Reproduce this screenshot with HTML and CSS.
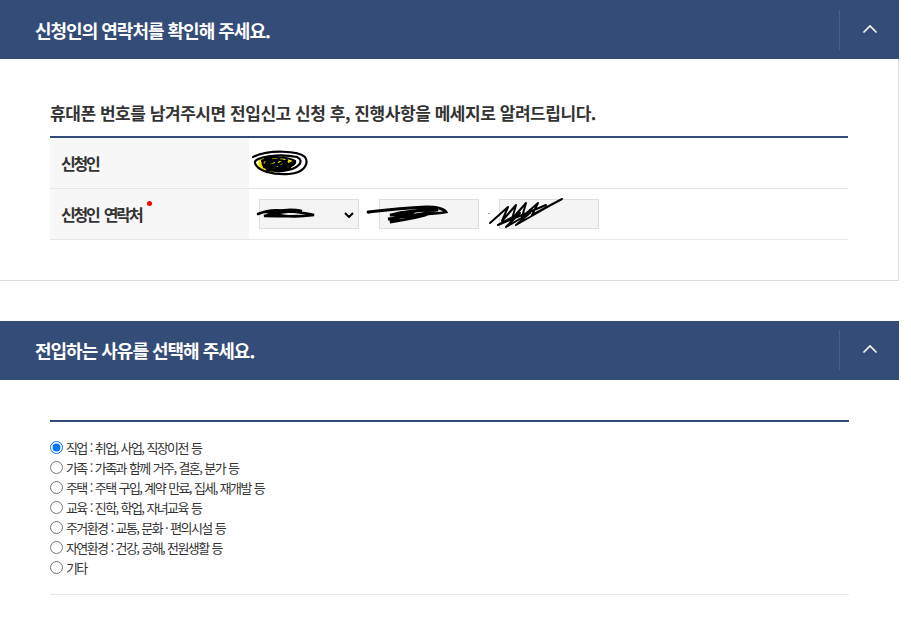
FILE: index.html
```html
<!DOCTYPE html>
<html lang="ko">

<head>
    <meta charset="UTF-8">
    <meta name="viewport" content="width=device-width, initial-scale=1.0">
    <title>전입신고</title>
    <link rel="stylesheet" href="styles.css">
</head>

<body>
    <div class="wrap">
        <!-- 신청인 연락처 -->
        <section class="panel">
            <div class="panel-head">
                <h2 class="panel-title">신청인의 연락처를 확인해 주세요.</h2>
                <button class="fold-btn" type="button" aria-label="접기">
                    <svg width="16" height="10" viewBox="0 0 16 10"><path d="M1.5 8.5 L8 2 L14.5 8.5" fill="none" stroke="#fff" stroke-width="1.6"/></svg>
                </button>
            </div>
            <div class="panel-body">
                <p class="guide">휴대폰 번호를 남겨주시면 전입신고 신청 후, 진행사항을 메세지로 알려드립니다.</p>
                <table class="form-table">
                    <tbody>
                        <tr>
                            <th>신청인</th>
                            <td>
                                <span class="scribble name-scribble">
                                    <svg width="60" height="30" viewBox="0 0 60 30">
                                        <path d="M10 12 L24 9 L38 11 L46 16 L40 23 L20 26 L9 21 Z" fill="#f2e600"/>
                                        <path d="M4 10 C20 2 50 4 56 10 C60 16 56 26 40 27 C24 28 8 24 6 16 C4 10 30 6 48 10 C56 14 50 22 34 24 C20 25 12 20 14 14 C18 8 40 10 46 14 C48 20 30 22 20 20 C12 18 18 12 30 13 C40 14 42 18 30 19" fill="none" stroke="#000" stroke-width="2.2" stroke-linecap="round"/>
                                        <path d="M12 14 L22 12 L16 18 L30 12 L24 20 L38 13 L32 21 L44 15 L40 22 L18 23 L28 17 L14 20" fill="none" stroke="#000" stroke-width="2.4" stroke-linejoin="round"/>
                                    </svg>
                                </span>
                            </td>
                        </tr>
                        <tr>
                            <th>신청인 연락처<span class="req"></span></th>
                            <td>
                                <div class="phone-row">
                                    <div class="field">
                                        <select class="phone-select">
                                            <option></option>
                                        </select>
                                        <span class="scribble sel-scribble">
                                            <svg width="60" height="16" viewBox="0 0 60 16">
                                                <path d="M2 9 C14 4 26 5 40 7 C48 8 54 9 58 10 C44 12 26 11 8 11 C20 8 34 6 46 6 C36 4 24 5 14 8 C24 11 36 12 48 11" fill="none" stroke="#000" stroke-width="2.6" stroke-linecap="round"/>
                                            </svg>
                                        </span>
                                    </div>
                                    <span class="dash">-</span>
                                    <div class="field">
                                        <input class="phone-input" type="text">
                                        <span class="scribble mid-scribble">
                                            <svg width="84" height="22" viewBox="0 0 84 22">
                                                <path d="M2 10 C20 8 40 6 60 5 C70 5 78 7 80 10 C66 13 44 13 24 13 C36 10 56 8 72 8 C58 12 40 15 22 17 C36 15 52 12 66 11 C52 16 38 18 24 20 C38 14 50 8 62 5" fill="none" stroke="#000" stroke-width="2.8" stroke-linecap="round"/>
                                            </svg>
                                        </span>
                                    </div>
                                    <span class="dash">-</span>
                                    <div class="field">
                                        <input class="phone-input" type="text">
                                        <span class="scribble end-scribble">
                                            <svg width="80" height="34" viewBox="0 0 80 34">
                                                <path d="M4 26 L22 10 L16 24 L30 8 L26 22 L40 6 L36 20 L52 6 L46 18 L76 2 L58 12 L30 28 L44 16 L20 30 L34 16 L12 28 L60 8" fill="none" stroke="#000" stroke-width="2" stroke-linejoin="round" stroke-linecap="round"/>
                                            </svg>
                                        </span>
                                    </div>
                                </div>
                            </td>
                        </tr>
                    </tbody>
                </table>
            </div>
        </section>

        <!-- 전입 사유 -->
        <section class="panel">
            <div class="panel-head">
                <h2 class="panel-title">전입하는 사유를 선택해 주세요.</h2>
                <button class="fold-btn" type="button" aria-label="접기">
                    <svg width="16" height="10" viewBox="0 0 16 10"><path d="M1.5 8.5 L8 2 L14.5 8.5" fill="none" stroke="#fff" stroke-width="1.6"/></svg>
                </button>
            </div>
            <div class="panel-body reason-body">
                <ul class="reason-list">
                    <li><label><input type="radio" name="reason" checked>직업 : 취업, 사업, 직장이전 등</label></li>
                    <li><label><input type="radio" name="reason">가족 : 가족과 함께 거주, 결혼, 분가 등</label></li>
                    <li><label><input type="radio" name="reason">주택 : 주택 구입, 계약 만료, 집세, 재개발 등</label></li>
                    <li><label><input type="radio" name="reason">교육 : 진학, 학업, 자녀교육 등</label></li>
                    <li><label><input type="radio" name="reason">주거환경 : 교통, 문화 · 편의시설 등</label></li>
                    <li><label><input type="radio" name="reason">자연환경 : 건강, 공해, 전원생활 등</label></li>
                    <li><label><input type="radio" name="reason">기타</label></li>
                </ul>
            </div>
        </section>
    </div>
</body>

</html>
```

FILE: styles.css
```css
body {
    margin: 0;
    padding: 0;
    background: #fff;
    font-family: "Noto Sans CJK KR", "Noto Sans", sans-serif;
    color: #333;
}

.wrap {
    width: 899px;
}

.panel {
    margin-bottom: 40px;
}

.panel-head {
    display: flex;
    align-items: center;
    justify-content: space-between;
    height: 59px;
    padding-left: 35px;
    background-color: #344c78;
}

.panel-title {
    margin: 0;
    color: #fff;
    font-size: 18px;
    font-weight: 700;
    letter-spacing: -1px;
}

.fold-btn {
    display: flex;
    align-items: center;
    justify-content: center;
    width: 60px;
    height: 40px;
    padding: 0 0 2px 0;
    border: none;
    border-left: 1px solid #4a6089;
    background: transparent;
    cursor: pointer;
}

.panel-body {
    padding: 40px 50px 40px 50px;
    border: 1px solid #ddd;
    border-top: none;
    border-left: none;
}

.guide {
    margin: 0 0 9px 0;
    font-size: 17px;
    font-weight: 700;
    line-height: 28px;
    letter-spacing: -0.45px;
    color: #333;
}

.form-table {
    width: 100%;
    border-collapse: collapse;
    border-top: 2px solid #344c78;
}

.form-table th,
.form-table td {
    height: 51px;
    border-bottom: 1px solid #e6e6e6;
    padding: 0;
    box-sizing: border-box;
}

.form-table th {
    width: 199px;
    padding-left: 11px;
    background-color: #f7f7f7;
    text-align: left;
    font-size: 16px;
    font-weight: 700;
    letter-spacing: -2.2px;
    word-spacing: 3px;
    color: #333;
}

.form-table td {
    padding-left: 10px;
}

.req {
    display: inline-block;
    width: 5px;
    height: 5px;
    margin-left: 6px;
    border-radius: 50%;
    background: #f00;
    vertical-align: 15px;
}

.scribble {
    display: inline-block;
    line-height: 0;
}

.name-scribble {
    margin-left: -10px;
    margin-top: 4px;
}

.phone-row {
    display: flex;
    align-items: center;
}

.field {
    position: relative;
}

.phone-select,
.phone-input {
    display: block;
    width: 100px;
    height: 30px;
    margin: 0;
    box-sizing: border-box;
    border: 1px solid #ddd;
    background-color: #f4f4f4;
    font-family: inherit;
    font-size: 13px;
}

.phone-select {
    appearance: none;
    background-image: url("data:image/svg+xml,%3Csvg xmlns='http://www.w3.org/2000/svg' width='10' height='6' viewBox='0 0 10 6'%3E%3Cpath d='M1 1 L5 5 L9 1' fill='none' stroke='%23000' stroke-width='2'/%3E%3C/svg%3E");
    background-repeat: no-repeat;
    background-position: 84px 12px;
}

.dash {
    width: 20px;
    text-align: center;
    font-size: 8px;
    color: #555;
}

.field .scribble {
    position: absolute;
}

.sel-scribble {
    left: -3px;
    top: 6px;
}

.mid-scribble {
    left: -13px;
    top: 3px;
}

.end-scribble {
    left: -13px;
    top: -2px;
}

.reason-body {
    padding-bottom: 0;
    border: none;
}

.reason-list {
    margin: 0;
    padding: 16px 0 16px 0;
    list-style: none;
    border-top: 2px solid #344c78;
    border-bottom: 1px solid #e6e6e6;
}

.reason-list li {
    height: 20px;
    line-height: 20px;
    font-size: 13px;
    letter-spacing: -1.6px;
    word-spacing: 1px;
    color: #333;
}

.reason-list label {
    display: flex;
    align-items: center;
}

.reason-list input {
    width: 13px;
    height: 13px;
    margin: 0 3px 0 0;
}
```
